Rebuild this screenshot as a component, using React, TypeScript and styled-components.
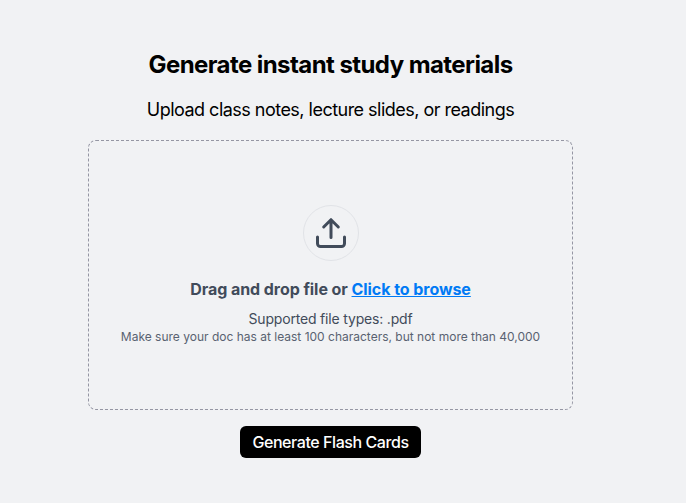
import React from "react";
import styled, { createGlobalStyle } from "styled-components";

const GlobalStyle = createGlobalStyle`
  *, *::before, *::after { box-sizing: border-box; }
  body { margin: 0; background: #f1f2f4; font-family: Inter, sans-serif; overflow: hidden; }
`;

const Page = styled.main`
  width: 661px;
  height: 503px;
  display: flex;
  flex-direction: column;
  align-items: center;
  padding-top: 49px;
`;

const Title = styled.h1`
  margin: 0;
  font-size: 24px;
  line-height: 32px;
  font-weight: 700;
  letter-spacing: -0.57px;
  white-space: nowrap;
  color: #000;
`;

const Subtitle = styled.p`
  margin: 15px 0 0;
  font-size: 18px;
  line-height: 28px;
  letter-spacing: -0.52px;
  white-space: nowrap;
  color: #000;
`;

const DropZone = styled.section`
  width: 485px;
  height: 270px;
  margin-top: 16px;
  padding-top: 64px;
  display: flex;
  flex-direction: column;
  align-items: center;
  border: 1px dashed #9596a3;
  border-radius: 8px;
  color: #414b5a;
`;

const UploadBadge = styled.div`
  width: 56px;
  height: 56px;
  border: 1px solid #e1e3e7;
  border-radius: 50%;
  display: grid;
  place-items: center;
`;

const Prompt = styled.p`
  margin: 16px 0 0;
  font-size: 16px;
  line-height: 24px;
  font-weight: 700;
  letter-spacing: -0.06px;
  white-space: nowrap;
`;

const BrowseLink = styled.a`
  color: #007af5;
  text-decoration: underline;
`;

const FileTypes = styled.p`
  margin: 8px 0 0;
  font-size: 14px;
  line-height: 20px;
  letter-spacing: -0.18px;
  white-space: nowrap;
`;

const Requirement = styled.p`
  margin: 0;
  font-size: 12px;
  line-height: 16px;
  color: #596271;
  white-space: nowrap;
`;

const GenerateButton = styled.button`
  width: 181px;
  height: 32px;
  margin-top: 16px;
  padding: 0;
  border: 0;
  border-radius: 6px;
  background: #000;
  color: #fff;
  font: 500 16px/24px Inter, sans-serif;
  letter-spacing: -0.43px;
  white-space: nowrap;
`;

export default function App() {
  return (
    <>
      <GlobalStyle />
      <Page>
        <Title>Generate instant study materials</Title>
        <Subtitle>Upload class notes, lecture slides, or readings</Subtitle>
        <DropZone>
          <UploadBadge>
            <svg width="32" height="32" viewBox="0 0 32 32" fill="none" stroke="#414b5a" strokeWidth="3" strokeLinecap="round" strokeLinejoin="round">
              <path d="M16 20.5V2.7M8.7 10L16 2.7l7.3 7.3M2.5 20v6.5a3 3 0 0 0 3 3h21a3 3 0 0 0 3-3V20" />
            </svg>
          </UploadBadge>
          <Prompt>Drag and drop file or <BrowseLink>Click to browse</BrowseLink></Prompt>
          <FileTypes>Supported file types: .pdf</FileTypes>
          <Requirement>Make sure your doc has at least 100 characters, but not more than 40,000</Requirement>
        </DropZone>
        <GenerateButton>Generate Flash Cards</GenerateButton>
      </Page>
    </>
  );
}
